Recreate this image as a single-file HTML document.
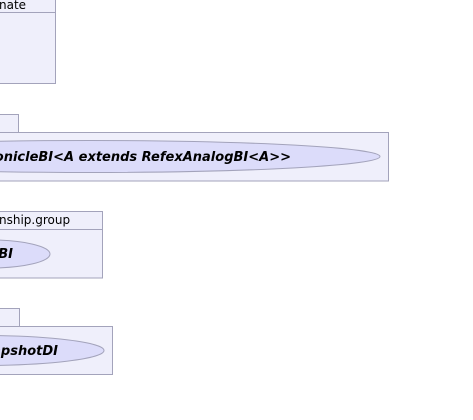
<html><body style="margin:0;background:#fff">
<svg width="473" height="420" xmlns="http://www.w3.org/2000/svg" style="display:block;font-family:'DejaVu Sans','Liberation Sans',sans-serif">
<g fill="#efeffb" stroke="#a3a3bb" stroke-width="1">
<rect x="-5" y="-5" width="60.5" height="88.5"/>
<line x1="-5" y1="12.5" x2="55.5" y2="12.5"/>
<rect x="-5" y="114.5" width="23.5" height="20"/>
<rect x="-5" y="132.5" width="393.5" height="48.5"/>
<rect x="-5" y="211.5" width="107.5" height="66.5"/>
<line x1="-5" y1="229.5" x2="102.5" y2="229.5"/>
<rect x="-5" y="308.5" width="24.5" height="20"/>
</g>
<rect x="-5" y="326.5" width="117.5" height="48" fill="#efeffb" stroke="#a3a3bb"/>
<g fill="#dcdcfa" stroke="#a3a3bb">
<ellipse cx="90" cy="156.5" rx="290" ry="16"/>
<ellipse cx="-10" cy="254" rx="60" ry="14"/>
<ellipse cx="-20" cy="350.5" rx="124" ry="15"/>
</g>
<g font-size="12" fill="#000">
<text x="-1" y="9">nate</text>
<text x="-1" y="224">nship.group</text>
</g>
<g font-size="13" font-weight="bold" font-style="italic" fill="#000" text-anchor="end">
<text x="291" y="161">onicleBI&lt;A extends RefexAnalogBI&lt;A&gt;&gt;</text>
<text x="13" y="258">BI</text>
<text x="58" y="355">apshotDI</text>
</g>
</svg>
</body></html>
